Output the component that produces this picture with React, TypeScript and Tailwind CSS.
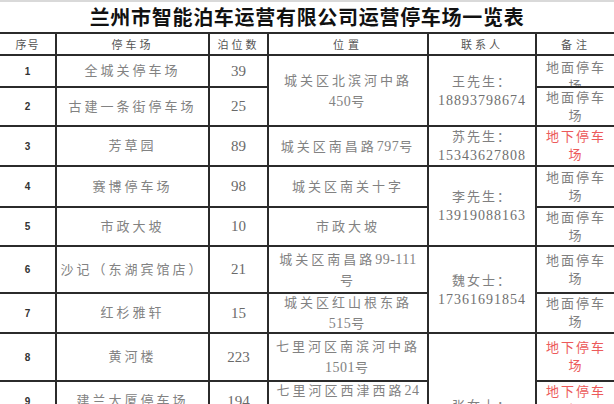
import React from "react";

const body = { fontFamily: '"Liberation Serif", "Noto Sans CJK SC", serif' } as React.CSSProperties;

function Txt({ t }: { t: string }) {
  const parts = t.split(/([\d-]+)/);
  return (
    <>
      {parts.map((p, i) =>
        /^[\d-]+$/.test(p) ? (
          <span key={i} className="tracking-[0.5px] text-[14px]">
            {p}
          </span>
        ) : (
          <span key={i}>{p}</span>
        )
      )}
    </>
  );
}

type Remark = "up" | "down";

function RemarkCell({ kind, top }: { kind: Remark; top?: boolean }) {
  const color = kind === "down" ? "text-[#ec5a5a]" : "text-[#808080]";
  return (
    <div
      className={`bg-white flex justify-center overflow-hidden ${top ? "items-start pt-[3px]" : "items-center"}`}
    >
      <div className={`text-[13px] leading-[18px] tracking-[2px] text-center ${color}`} style={body}>
        <div>{kind === "down" ? "地下停车" : "地面停车"}</div>
        <div>场</div>
      </div>
    </div>
  );
}

function No({ n }: { n: number }) {
  return (
    <div className="bg-white flex items-center justify-center">
      <span
        className="text-[10px] font-bold text-[#333]"
        style={{ fontFamily: '"Liberation Sans", Arial, sans-serif' }}
      >
        {n}
      </span>
    </div>
  );
}

function Name({ t }: { t: string }) {
  return (
    <div className="bg-white flex items-center justify-center overflow-hidden">
      <span className="text-[13px] tracking-[3px] text-[#828282] whitespace-nowrap" style={body}>
        {t}
      </span>
    </div>
  );
}

function Spots({ t }: { t: string }) {
  return (
    <div className="bg-white flex items-center justify-center">
      <span className="text-[15px] text-[#6a6a6a]" style={body}>
        {t}
      </span>
    </div>
  );
}

function Addr({ lines, span }: { lines: string[]; span?: string }) {
  return (
    <div className={`bg-white flex items-center justify-center text-center ${span ?? ""}`}>
      <div className="text-[13px] leading-[21px] tracking-[3px] text-[#828282]" style={body}>
        {lines.map((l, i) => (
          <div key={i} className="whitespace-nowrap">
            <Txt t={l} />
          </div>
        ))}
      </div>
    </div>
  );
}

function Contact({ name, phone, span }: { name: string; phone: string; span: string }) {
  return (
    <div className={`bg-white flex items-center justify-center text-center ${span}`}>
      <div className="leading-[19px] text-[#707070]" style={body}>
        <div className="text-[13px] tracking-[2px] text-[#808080]">{name}</div>
        <div className="text-[14px] tracking-[1px]">{phone}</div>
      </div>
    </div>
  );
}

function Head({ t, cls }: { t: string; cls?: string }) {
  return (
    <div className="bg-white flex items-center justify-center">
      <span
        className={`text-[11px] text-[#555] ${cls ?? "tracking-[3px]"}`}
        style={{ fontFamily: '"Noto Sans CJK SC", sans-serif' }}
      >
        {t}
      </span>
    </div>
  );
}

export default function App() {
  return (
    <div className="w-[614px] h-[404px] overflow-hidden bg-white">
      <div className="h-[2px] bg-[#d9d9d9]" />
      <div className="h-[30px] flex items-center justify-center">
        <h1
          className="text-[20px] font-bold text-[#111] tracking-[0.7px]"
          style={{ fontFamily: '"Noto Sans CJK SC", sans-serif' }}
        >
          兰州市智能泊车运营有限公司运营停车场一览表
        </h1>
      </div>
      <div className="w-[615px] bg-[#2b2b2b] pt-[2px] grid gap-[2px] grid-cols-[55px_151px_57px_158px_106px_78px] grid-rows-[20px_30px_37px_38px_39px_37px_45px_38px_46px_38px_74px]">
        <Head t="序号" cls="tracking-[1px]" />
        <Head t="停车场" />
        <Head t="泊位数" />
        <Head t="位置" cls="tracking-[4px]" />
        <Head t="联系人" />
        <Head t="备注" cls="tracking-[4px]" />

        {/* row 1 */}
        <No n={1} />
        <Name t="全城关停车场" />
        <Spots t="39" />
        <Addr lines={["城关区北滨河中路", "450号"]} span="row-span-2" />
        <Contact name="王先生：" phone="18893798674" span="row-span-2" />
        <RemarkCell kind="up" top />

        {/* row 2 */}
        <No n={2} />
        <Name t="古建一条街停车场" />
        <Spots t="25" />
        <RemarkCell kind="up" />

        {/* row 3 */}
        <No n={3} />
        <Name t="芳草园" />
        <Spots t="89" />
        <Addr lines={["城关区南昌路797号"]} />
        <Contact name="苏先生：" phone="15343627808" span="" />
        <RemarkCell kind="down" />

        {/* row 4 */}
        <No n={4} />
        <Name t="赛博停车场" />
        <Spots t="98" />
        <Addr lines={["城关区南关十字"]} />
        <Contact name="李先生：" phone="13919088163" span="row-span-2" />
        <RemarkCell kind="up" />

        {/* row 5 */}
        <No n={5} />
        <Name t="市政大坡" />
        <Spots t="10" />
        <Addr lines={["市政大坡"]} />
        <RemarkCell kind="up" />

        {/* row 6 */}
        <No n={6} />
        <Name t="沙记（东湖宾馆店）" />
        <Spots t="21" />
        <Addr lines={["城关区南昌路99-111", "号"]} />
        <Contact name="魏女士：" phone="17361691854" span="row-span-2" />
        <RemarkCell kind="up" />

        {/* row 7 */}
        <No n={7} />
        <Name t="红杉雅轩" />
        <Spots t="15" />
        <Addr lines={["城关区红山根东路", "515号"]} />
        <RemarkCell kind="up" />

        {/* row 8 */}
        <No n={8} />
        <Name t="黄河楼" />
        <Spots t="223" />
        <Addr lines={["七里河区南滨河中路", "1501号"]} />
        <Contact name="张女士：" phone="18009318526" span="row-span-3" />
        <RemarkCell kind="down" />

        {/* row 9 */}
        <No n={9} />
        <Name t="建兰大厦停车场" />
        <Spots t="194" />
        <Addr lines={["七里河区西津西路24", "号"]} />
        <RemarkCell kind="down" />

        {/* row 10 */}
        <No n={10} />
        <Name t="西站停车场" />
        <Spots t="120" />
        <Addr lines={["七里河区西津西路", "16号"]} />
        <RemarkCell kind="down" />
      </div>
    </div>
  );
}
